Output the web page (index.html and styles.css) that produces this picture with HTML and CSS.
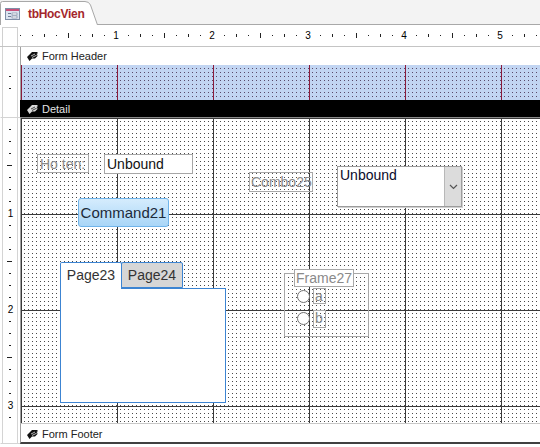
FILE: index.html
```html
<!DOCTYPE html>
<html>
<head>
<meta charset="utf-8">
<link rel="stylesheet" href="styles.css">
</head>
<body>
<div class="app">
  <div class="tabstrip">
    <div class="doctab">
      <svg class="tabshape" width="100" height="25" viewBox="0 0 100 25"><path d="M0.5 25 L0.5 3.5 Q0.5 1.5 2.5 1.5 L85 1.5 Q89 1.5 90.5 5 L97.5 25" fill="#fff" stroke="#a8a8a8"/></svg>
      <svg class="formico" width="15" height="12" viewBox="0 0 15 12"><rect x="0.5" y="0.5" width="14" height="11" fill="#dbe4f0" stroke="#7f8ea6"/><rect x="1" y="1" width="13" height="2" fill="#c8507a"/><rect x="3" y="5" width="3" height="1" fill="#6f7d96"/><rect x="7" y="5" width="5" height="2" fill="#fff" stroke="#6f7d96" stroke-width="0.6"/><rect x="3" y="8" width="3" height="1" fill="#6f7d96"/><rect x="7" y="8" width="5" height="2" fill="#fff" stroke="#6f7d96" stroke-width="0.6"/></svg>
      <span class="tabtitle">tbHocVien</span>
    </div>
  </div>

  <div class="ruler-row">
    <div class="corner"><div class="cornerbox"></div></div>
    <div class="hruler">
      <div class="inch"><span class="num">1</span></div>
      <div class="inch"><span class="num">2</span></div>
      <div class="inch"><span class="num">3</span></div>
      <div class="inch"><span class="num">4</span></div>
      <div class="inch"><span class="num">5</span></div>
    </div>
  </div>

  <div class="row bar-row">
    <div class="vr"></div>
    <div class="bar light">
      <svg class="secico" width="11" height="10" viewBox="0 0 11 10"><path d="M0 6 L5 1 L11 1 L9.5 2.5 L11 2.5 L9 4.5 L11 4.5 L8 7.5 L5 7.5 L2.5 10 Z" fill="#111"/><path d="M4 5 L8 3 M5 6.5 L9 4.5" stroke="#fff" stroke-width="0.7"/></svg>
      <span>Form Header</span>
    </div>
  </div>

  <div class="row header-row">
    <div class="vr vr-ticks"></div>
    <div class="area header-area"></div>
  </div>

  <div class="row bar-row detail-bar">
    <div class="vr"></div>
    <div class="bar dark">
      <svg class="secico" width="11" height="10" viewBox="0 0 11 10"><path d="M0 6 L5 1 L11 1 L9.5 2.5 L11 2.5 L9 4.5 L11 4.5 L8 7.5 L5 7.5 L2.5 10 Z" fill="#d8d8d8"/><path d="M4 5 L8 3 M5 6.5 L9 4.5" stroke="#000" stroke-width="0.7"/></svg>
      <span>Detail</span>
    </div>
  </div>

  <div class="row detail-row">
    <div class="vr vr-ticks vr-nums">
      <div class="vinch"><span>1</span></div>
      <div class="vinch"><span>2</span></div>
      <div class="vinch"><span>3</span></div>
    </div>
    <div class="area detail-area">
      <div class="ctl lbl hoten">Ho ten:</div>
      <div class="ctl txt tb1">Unbound</div>
      <div class="ctl btn">Command21</div>
      <div class="ctl lbl combolbl">Combo25</div>
      <div class="ctl combo">
        <span class="combotext">Unbound</span>
        <span class="dd"><svg width="9" height="6" viewBox="0 0 9 6"><path d="M1 1 L4.5 4.5 L8 1" fill="none" stroke="#555" stroke-width="1.2"/></svg></span>
      </div>
      <div class="ctl tabctl">
        <div class="tabs">
          <div class="ptab active">Page23</div>
          <div class="ptab">Page24</div>
        </div>
        <div class="tabbody"></div>
      </div>
      <div class="ctl frame"></div>
      <div class="ctl lbl framelbl">Frame27</div>
      <div class="ctl radio ra"></div>
      <div class="ctl radio rb"></div>
      <div class="ctl lbl optlbl la">a</div>
      <div class="ctl lbl optlbl lb">b</div>
    </div>
  </div>

  <div class="row bar-row footer-bar">
    <div class="vr"></div>
    <div class="bar light">
      <svg class="secico" width="11" height="10" viewBox="0 0 11 10"><path d="M0 6 L5 1 L11 1 L9.5 2.5 L11 2.5 L9 4.5 L11 4.5 L8 7.5 L5 7.5 L2.5 10 Z" fill="#111"/><path d="M4 5 L8 3 M5 6.5 L9 4.5" stroke="#fff" stroke-width="0.7"/></svg>
      <span>Form Footer</span>
    </div>
  </div>
</div>
</body>
</html>
```

FILE: styles.css
```css
* { box-sizing: border-box; margin: 0; padding: 0; }
html, body { width: 540px; height: 447px; overflow: hidden; background: #fff; }
body { font-family: "Liberation Sans", Arial, sans-serif; color: #000; }

.app { width: 540px; height: 447px; display: flex; flex-direction: column; }

/* document tab strip */
.tabstrip {
  height: 25px;
  flex: none;
  background: #f3f3f3;
  border-bottom: 1px solid #a8a8a8;
  display: flex;
  align-items: flex-end;
}
.doctab {
  position: relative;
  width: 100px;
  height: 25px;
  margin-bottom: -1px;
  display: flex;
  align-items: center;
  padding-left: 5px;
  padding-top: 2px;
}
.tabshape { position: absolute; left: 0; top: 0; }
.formico { position: relative; margin-right: 8px; }
.tabtitle {
  position: relative;
  font-size: 12px;
  font-weight: bold;
  color: #a4262c;
  letter-spacing: -0.3px;
}

/* ruler row */
.ruler-row {
  height: 22px;
  flex: none;
  display: flex;
  border-bottom: 1px solid #c4c4c4;
}
.corner { width: 20px; padding: 2px 0 0 2px; }
.cornerbox { width: 16px; height: 100%; border: 1px solid #d0d0d0; border-bottom: none; }
.hruler {
  flex: 1;
  display: flex;
  align-items: center;
  padding-top: 1px;
  background-image:
    repeating-linear-gradient(to right, #222 0 1px, transparent 1px 12px),
    repeating-linear-gradient(to right, transparent 0 24px, #222 24px 25px, transparent 25px 48px),
    repeating-linear-gradient(to right, transparent 0 48px, #222 48px 49px, transparent 49px 96px);
  background-size: 100% 1px, 100% 3px, 100% 5px;
  background-position: 0 10px, 0 9px, 0 8px;
  background-repeat: no-repeat;
}
.inch { width: 96px; flex: none; display: flex; justify-content: flex-end; }
.num {
  font-size: 10px;
  line-height: 12px;
  background: #fff;
  margin-right: -3px;
  width: 6px;
  text-align: center;
  position: relative;
}

/* rows */
.row { display: flex; flex: none; }
.vr {
  width: 20px;
  flex: none;
  position: relative;
  border-left: 1px solid #fff;
  background-image:
    linear-gradient(#d4d4d4, #d4d4d4),
    linear-gradient(#d4d4d4, #d4d4d4);
  background-size: 1px 100%, 1px 100%;
  background-position: 1px 0, 16px 0;
  background-repeat: no-repeat;
}
.vr-ticks {
  background-image:
    linear-gradient(#d4d4d4, #d4d4d4),
    linear-gradient(#d4d4d4, #d4d4d4),
    repeating-linear-gradient(to bottom, transparent 0 11px, #222 11px 12px),
    repeating-linear-gradient(to bottom, transparent 0 47px, #222 47px 48px, transparent 48px 96px);
  background-size: 1px 100%, 1px 100%, 2px 100%, 5px 100%;
  background-position: 1px 0, 16px 0, 8px 0, 6px 0;
  background-repeat: no-repeat;
}

.bar-row { height: 18px; }
.bar {
  flex: 1;
  display: flex;
  align-items: center;
  gap: 4px;
  padding-left: 6px;
  font-size: 11px;
  border-left: 1px solid #a0a0a0;
}
.bar.light { background: #fff; color: #222; }
.bar.dark { background: #000; color: #e4e4e4; border-left-color: #000; }
.detail-bar { height: 17px; }

.area { flex: 1; border-left: 1px solid #a0a0a0; position: relative; }

.header-row { height: 35px; }
.header-area {
  background-color: #c2d5f2;
  background-image:
    linear-gradient(to right, #8b1c3c 1px, transparent 1px),
    linear-gradient(to right, transparent 1px, #c2d5f2 1px),
    linear-gradient(to bottom, #5a4a6a 1px, transparent 1px);
  background-size: 96px 100%, 4px 4px, 4px 4px;
  background-position: 0 0, 3px 0, 0 3px;
}

.detail-row { height: 307px; }
.detail-row .vr { border-top: 1px solid #d4d4d4; }
.detail-area {
  border-top: 1px solid #8a8a8a;
  border-bottom: 1px solid #c8c8c8;
  background-color: #fff;
  background-image:
    linear-gradient(to right, #3a3a3a 1px, transparent 1px),
    linear-gradient(to bottom, #3a3a3a 1px, transparent 1px),
    linear-gradient(to right, transparent 1px, #fff 1px),
    linear-gradient(to bottom, #4a4a4a 1px, transparent 1px);
  background-size: 96px 96px, 96px 96px, 4px 4px, 4px 4px;
  background-position: 0 0, 0 0, 3px 0, 0 3px;
}
.vr-nums { display: flex; flex-direction: column; }
.vinch {
  height: 96px;
  flex: none;
  display: flex;
  align-items: flex-end;
  justify-content: center;
}
.vinch span {
  font-size: 10px;
  line-height: 12px;
  background: #fff;
  margin-bottom: -6px;
  padding: 0 1px;
}

.footer-bar { height: 20px; }
.footer-bar .bar { border-bottom: 2px solid #404040; padding-top: 1px; }
.footer-bar .vr { border-bottom: 1px solid #d4d4d4; }

/* controls on the design canvas */
.ctl { position: absolute; font-size: 14px; line-height: 18px; white-space: nowrap; overflow: hidden; }
.lbl { color: #8a8a8a; border: 1px solid #a8a8a8; padding-left: 2px; }
.hoten { left: 16px; top: 36px; width: 52px; height: 19px; }
.tb1 { left: 83px; top: 36px; width: 89px; height: 20px; background: #fff; border: 1px solid #a6a6a6; padding-left: 2px; color: #111; }
.btn {
  left: 57px; top: 80px; width: 91px; height: 29px;
  border: 1px solid #6fb4ea;
  border-radius: 3px;
  background: linear-gradient(#d5ecfd, #a9d6f7);
  font-size: 15px;
  line-height: 27px;
  text-align: center;
  color: #1c2a3a;
}
.combolbl { left: 228px; top: 54px; width: 64px; height: 20px; padding-left: 1px; }
.combo {
  left: 316px; top: 48px; width: 125px; height: 41px;
  background: #fff;
  border: 1px solid #9c9c9c;
  box-shadow: 1px 1px 0 #d0d0d0;
  display: flex;
}
.combotext { flex: 1; padding: 0 0 0 2px; color: #0a0a2a; line-height: 17px; }
.dd {
  width: 17px;
  background: #dcdcdc;
  border-left: 1px solid #b8b8b8;
  display: flex;
  align-items: center;
  justify-content: center;
}

.tabctl { left: 39px; top: 144px; width: 166px; height: 141px; overflow: visible; display: flex; flex-direction: column; }
.tabs { display: flex; height: 27px; position: relative; z-index: 1; margin-bottom: -1px; }
.ptab {
  font-size: 14px;
  line-height: 25px;
  color: #333;
  border: 1px solid #3c84d2;
  border-bottom: none;
  border-radius: 2px 2px 0 0;
  text-align: center;
}
.ptab.active { width: 62px; background: #fff; height: 27px; }
.ptab:not(.active) { width: 62px; background: #d6d6d6; height: 26px; margin-left: -1px; border-bottom: 1px solid #3c84d2; }
.tabbody { flex: 1; background: #fff; border: 1px solid #3c84d2; }

.frame { left: 263px; top: 155px; width: 85px; height: 64px; border: 1px solid #a8a8a8; }
.framelbl { left: 273px; top: 151px; width: 60px; height: 18px; background: #fff; line-height: 16px; padding-left: 1px; }
.radio {
  width: 13px; height: 13px;
  border: 1px solid #707070;
  border-radius: 50%;
  background: #fff;
}
.ra { left: 276px; top: 172px; }
.rb { left: 276px; top: 194px; }
.optlbl { width: 13px; height: 16px; line-height: 15px; padding-left: 1px; color: #888; }
.la { left: 292px; top: 170px; }
.lb { left: 292px; top: 192px; height: 18px; }
```
